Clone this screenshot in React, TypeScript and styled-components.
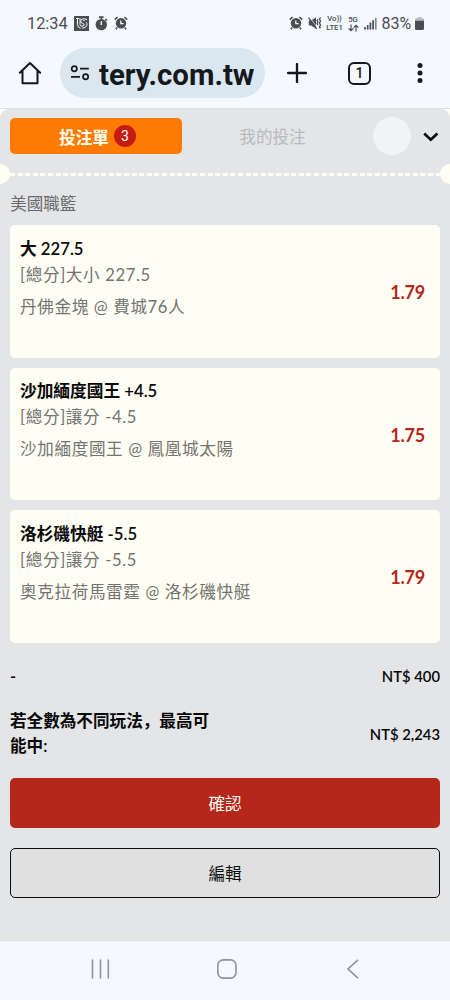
import React from "react";
import styled, { createGlobalStyle } from "styled-components";

const GlobalStyle = createGlobalStyle`
  * { box-sizing: border-box; }
  body { margin: 0; background: #f5f8fd; }
  button { margin: 0; padding: 0; border: 0; background: none; color: inherit; font: inherit; letter-spacing: inherit; }
  svg { display: block; flex: none; }
`;

const Screen = styled.div`
  width: 450px;
  height: 1000px;
  display: flex;
  flex-direction: column;
  overflow: hidden;
  background: #f5f8fd;
  font-family: Lato, "Noto Sans CJK TC", sans-serif;
  font-size: 16.6px;
`;

const StatusBar = styled.header`
  height: 46px;
  display: flex;
  justify-content: space-between;
  padding: 0 26px 0 27px;
  color: #4b4d50;
  font-family: Roboto, sans-serif;
`;

const StatusGroup = styled.div<{ $gap: number }>`
  display: flex;
  align-items: center;
  gap: ${(p) => p.$gap}px;
`;

const Clock = styled.span`
  width: 41px;
  font-size: 16.3px;
  white-space: nowrap;
`;

const NetworkLabel = styled.span<{ $width: number }>`
  width: ${(p) => p.$width}px;
  display: flex;
  flex-direction: column;
  align-items: center;
  font-size: 7.8px;
  font-weight: 500;
  letter-spacing: -0.1px;
  line-height: 9px;
  white-space: nowrap;
`;

const Battery = styled.span`
  width: 33.5px;
  font-size: 16px;
  white-space: nowrap;
`;

const BrowserBar = styled.div`
  height: 63px;
  display: flex;
  align-items: flex-start;
  padding: 2px 0 0 18px;
  color: #15191c;
  border-bottom: 1px solid #d9e0e7;
`;

const ToolButton = styled.button<{ $width: number }>`
  width: ${(p) => p.$width}px;
  height: 50px;
  display: flex;
  align-items: center;
  justify-content: flex-start;
`;

const AddressPill = styled.div`
  width: 205px;
  height: 50px;
  margin-right: 22px;
  display: flex;
  align-items: center;
  gap: 9px;
  padding-left: 10px;
  border-radius: 25px;
  background: #dae7f0;
`;

const Address = styled.span`
  padding-top: 3px;
  font: 700 29.4px/46px Roboto, sans-serif;
  white-space: nowrap;
`;

const Backdrop = styled.div`
  flex: 1;
  min-height: 0;
  background: #fffef4;
`;

const Sheet = styled.main`
  height: 100%;
  display: flex;
  flex-direction: column;
  padding-top: 9.3px;
  border-radius: 9px 9px 0 0;
  background: #e4e5e7;
`;

const Tabs = styled.nav`
  height: 35.7px;
  display: flex;
  align-items: center;
  padding: 0 11px 0 10px;
`;

const ActiveTab = styled.button`
  width: 172px;
  height: 100%;
  display: flex;
  align-items: center;
  justify-content: center;
  gap: 5px;
  padding: 1px 0 0 3px;
  border-radius: 5px;
  background: #ff7a00;
  color: #fffef4;
  font-weight: 700;
`;

const Count = styled.span`
  width: 22px;
  height: 22px;
  margin-top: -1px;
  border-radius: 50%;
  background: #c41b12;
  font: 400 14px/22px Roboto, sans-serif;
  text-align: center;
`;

const Tab = styled.button`
  width: 181px;
  color: #b9babb;
  text-align: center;
`;

const Avatar = styled.span`
  width: 38px;
  height: 38px;
  margin: 0 12px 0 10px;
  border-radius: 50%;
  background: #f2f3f5;
`;

const Perforation = styled.div`
  height: 20px;
  margin-top: 10px;
  display: flex;
  align-items: center;
  justify-content: space-between;
`;

const Notch = styled.span<{ $right?: boolean }>`
  width: 10px;
  height: 20px;
  border-radius: ${(p) => (p.$right ? "10px 0 0 10px" : "0 10px 10px 0")};
  background: #fffef4;
`;

const DashedLine = styled.span`
  flex: 1;
  height: 3px;
  margin-top: 1px;
  background: repeating-linear-gradient(90deg, #fffef4 0 5px, transparent 5px 7.6px);
`;

const League = styled.h2`
  margin: 7px 0 0 10.3px;
  height: 34.4px;
  flex: none;
  color: #68696b;
  font-size: 16.5px;
  font-weight: 400;
  line-height: 26px;
`;

const BetList = styled.section`
  display: flex;
  flex-direction: column;
  gap: 10px;
  padding: 0 10px;
`;

const BetCard = styled.article`
  height: 132.5px;
  display: flex;
  justify-content: space-between;
  align-items: center;
  padding: 0 15px 0 10px;
  border-radius: 5px;
  background: #fffef4;
`;

const BetInfo = styled.div`
  align-self: stretch;
  padding-top: 10.6px;
`;

const Pick = styled.h3`
  margin: 0;
  color: #080808;
  font-size: 16.7px;
  font-weight: 600;
  line-height: 26px;
`;

const Detail = styled.p<{ $spaced?: boolean }>`
  margin: ${(p) => (p.$spaced ? 6 : 0)}px 0 0;
  color: #737370;
  font-size: 16.6px;
  letter-spacing: 0.63px;
  line-height: 26px;
`;

const Odds = styled.strong`
  padding-top: 1px;
  color: #b5261b;
  font-size: 18px;
  letter-spacing: -0.2px;
  line-height: 22px;
`;

const SummaryRow = styled.div<{ $height: number; $offset?: number }>`
  height: ${(p) => p.$height}px;
  flex: none;
  display: flex;
  align-items: center;
  justify-content: space-between;
  padding: ${(p) => p.$offset ?? 0}px 10px 0;
  color: #080808;
  font-weight: 600;
  line-height: 25.6px;
`;

const SummaryLabel = styled.span`
  width: 208px;
  font-family: Lato, "Noto Sans CJK SC", sans-serif;
`;

const Amount = styled.span`
  font-size: 14.8px;
`;

const Actions = styled.div`
  display: flex;
  flex-direction: column;
  gap: 20px;
  padding: 17.8px 10px 0;
`;

const ActionButton = styled.button<{ $primary?: boolean }>`
  height: 50px;
  border: ${(p) => (p.$primary ? "0" : "1px solid #0c0c0c")};
  border-radius: 5px;
  background: ${(p) => (p.$primary ? "#b5261b" : "#e0e0e0")};
  color: ${(p) => (p.$primary ? "#fffef4" : "#101010")};
`;

const SystemNav = styled.footer`
  height: 60px;
  display: flex;
  align-items: center;
  gap: 106.5px;
  padding: 0 0 4px 90px;
  border-top: 1px solid #dddfe2;
  color: #919397;
`;

const AlarmIcon = () => (
  <svg width="14" height="14" viewBox="0 0 14 14" fill="none">
    <circle cx="7" cy="7.3" r="5.2" fill="currentColor" />
    <path d="M.8 3.6 3.6 1M13.2 3.6 10.4 1M3.2 11.6l-1.3 1.6M10.8 11.6l1.3 1.6" stroke="currentColor" strokeWidth="1.6" />
    <path d="M6.8 4.4v3.2h2.8" stroke="#f5f8fd" strokeWidth="1.3" />
  </svg>
);

const AppBadgeIcon = () => (
  <svg width="15" height="15" viewBox="0 0 15 15" fill="none">
    <path d="M0 0h15v15H0z" fill="currentColor" />
    <path d="M2 2.5h3M3.5 2.5v5.8q0 3.2 3.1 4M6 2.2v6.5q0 1.5 2 1.5 2.2 0 2.2-1.3 0-1.1-1.8-1.7-1.8-.6-1.8-2.1 0-2.3 3.2-2.3 2.6 0 3.2 1.1M9 5q.2-1 1.7-.5M12 6.2q1.3 1 .9 3-.7 2.8-4.7 3" stroke="#f5f8fd" strokeWidth="1" />
  </svg>
);

const TimerIcon = () => (
  <svg width="13" height="15" viewBox="0 0 13 15" fill="none">
    <circle cx="6.3" cy="8.6" r="5.7" fill="currentColor" />
    <path d="M4 1.2h4.6M10.3 3l1.6 1.5M6.3 1v3" stroke="currentColor" strokeWidth="1.7" />
    <path d="M6.3 5.2v3.8" stroke="#f5f8fd" strokeWidth="1.4" />
  </svg>
);

const MuteIcon = () => (
  <svg width="14" height="14" viewBox="0 0 14 14" fill="none">
    <path d="M.8 4.6h2.4L8 1.2v11.4L3.2 9.5H.8z" fill="currentColor" />
    <path d="M1.8 1.5 9.2 11.5" stroke="#f5f8fd" strokeWidth=".8" />
    <path d="M.5 1.7 8.7 12.8M9.9 3.2l-.8 1.4.8 1.4-.8 1.6.8 1.4M12.5 1.4l-1 1.8 1 1.9-1 1.9 1 1.9-1 1.9.8 1.6" stroke="currentColor" strokeWidth="1.3" />
  </svg>
);

const DataArrowsIcon = () => (
  <svg width="11" height="8" viewBox="0 -.5 11 8" fill="none" stroke="currentColor" strokeWidth="1.2">
    <path d="M3 0v6M.6 3.8 3 6.2l2.4-2.4M8 7V1M5.6 3.2 8 .8l2.4 2.4" />
  </svg>
);

const SignalIcon = () => (
  <svg width="13" height="13" viewBox="0 0 13 13" stroke="currentColor" strokeWidth="1.7">
    <path d="M1 10v2.5M3.7 8v4.5M6.4 5.5v7M9.1 3.2v9.3" />
    <path d="M11.8.8v11.7" opacity=".65" />
  </svg>
);

const BatteryIcon = () => (
  <svg width="9" height="13" viewBox="0 0 9 13" fill="currentColor">
    <path d="M2.5 0h4v1.2H8q1 0 1 1v2H0v-2q0-1 1-1h1.5z" opacity=".35" />
    <path d="M0 3.7h9v7.8q0 1.5-1.5 1.5h-6Q0 13 0 11.5z" />
  </svg>
);

const HomeIcon = () => (
  <svg width="24" height="24" viewBox="0 0 24 24" fill="none" stroke="currentColor" strokeWidth="2" strokeLinejoin="round" strokeLinecap="round">
    <path d="M1.8 11.8 12 2l10.2 9.8M4.5 10v12.2h15V10" />
  </svg>
);

const SiteSettingsIcon = () => (
  <svg width="20" height="18" viewBox="0 0 20 18" fill="none" stroke="currentColor" strokeWidth="1.7">
    <circle cx="4.3" cy="4.7" r="2.6" />
    <path d="M10 4.7h8.8M1 12.8h9" />
    <circle cx="15.6" cy="12.8" r="2.6" />
  </svg>
);

const PlusIcon = () => (
  <svg width="20" height="20" viewBox="0 0 20 20" stroke="currentColor" strokeWidth="2.3" strokeLinecap="round">
    <path d="M10 1.1v17.8M1.1 10h17.8" />
  </svg>
);

const TabCount = styled.span`
  width: 23px;
  height: 23px;
  border: 2px solid currentColor;
  border-radius: 6px;
  font: 500 14px/19px Roboto, sans-serif;
  text-align: center;
`;

const MenuIcon = () => (
  <svg width="6" height="22" viewBox="0 0 6 22" fill="currentColor">
    <circle cx="3" cy="3.5" r="2.5" />
    <circle cx="3" cy="11" r="2.5" />
    <circle cx="3" cy="18.5" r="2.5" />
  </svg>
);

const Chevron = styled.svg`
  margin-top: 2px;
`;

const ChevronIcon = () => (
  <Chevron width="16" height="10" viewBox="0 0 16 10" fill="none" stroke="#050505" strokeWidth="2.7">
    <path d="m1.2 1.5 6.6 6.2 6.6-6.2" />
  </Chevron>
);

const RecentsIcon = () => (
  <svg width="20" height="20" viewBox="0 0 20 20" stroke="currentColor" strokeWidth="1.6" strokeLinecap="round">
    <path d="M2.5 1v18M10.5 1v18M18.3 1v18" />
  </svg>
);

const NavHomeIcon = () => (
  <svg width="20" height="20" viewBox="0 0 20 20" fill="none" stroke="currentColor" strokeWidth="1.6">
    <rect x=".8" y=".9" width="18.2" height="18.2" rx="5.5" />
  </svg>
);

const BackIcon = () => (
  <svg width="28" height="20" viewBox="0 0 28 20" fill="none" stroke="currentColor" strokeWidth="1.6">
    <path d="M15 .8 5 10l10 9.2" />
  </svg>
);

const bets = [
  { pick: "大 227.5", market: "[總分]大小 227.5", match: "丹佛金塊 @ 費城76人", odds: "1.79" },
  { pick: "沙加緬度國王 +4.5", market: "[總分]讓分 -4.5", match: "沙加緬度國王 @ 鳳凰城太陽", odds: "1.75" },
  { pick: "洛杉磯快艇 -5.5", market: "[總分]讓分 -5.5", match: "奧克拉荷馬雷霆 @ 洛杉磯快艇", odds: "1.79" },
];

export default function App() {
  return (
    <Screen>
      <GlobalStyle />
      <StatusBar>
        <StatusGroup $gap={6}>
          <Clock>12:34</Clock>
          <AppBadgeIcon />
          <TimerIcon />
          <AlarmIcon />
        </StatusGroup>
        <StatusGroup $gap={5}>
          <AlarmIcon />
          <MuteIcon />
          <NetworkLabel $width={16}>
            <span>Vo))</span>
            <span>LTE1</span>
          </NetworkLabel>
          <NetworkLabel $width={11}>
            <span>5G</span>
            <DataArrowsIcon />
          </NetworkLabel>
          <SignalIcon />
          <StatusGroup $gap={0}>
            <Battery>83%</Battery>
            <BatteryIcon />
          </StatusGroup>
        </StatusGroup>
      </StatusBar>
      <BrowserBar>
        <ToolButton $width={42} aria-label="Home"><HomeIcon /></ToolButton>
        <AddressPill>
          <SiteSettingsIcon />
          <Address>tery.com.tw</Address>
        </AddressPill>
        <ToolButton $width={61} aria-label="New tab"><PlusIcon /></ToolButton>
        <ToolButton $width={69} aria-label="Tabs"><TabCount>1</TabCount></ToolButton>
        <ToolButton $width={6} aria-label="Menu"><MenuIcon /></ToolButton>
      </BrowserBar>
      <Backdrop>
        <Sheet>
          <Tabs>
            <ActiveTab>
              投注單<Count>3</Count>
            </ActiveTab>
            <Tab>我的投注</Tab>
            <Avatar />
            <ChevronIcon />
          </Tabs>
          <Perforation>
            <Notch />
            <DashedLine />
            <Notch $right />
          </Perforation>
          <League>美國職籃</League>
          <BetList>
            {bets.map((bet) => (
              <BetCard key={bet.pick}>
                <BetInfo>
                  <Pick>{bet.pick}</Pick>
                  <Detail>{bet.market}</Detail>
                  <Detail $spaced>{bet.match}</Detail>
                </BetInfo>
                <Odds>{bet.odds}</Odds>
              </BetCard>
            ))}
          </BetList>
          <SummaryRow $height={66} $offset={2}>
            <SummaryLabel>-</SummaryLabel>
            <Amount>NT$ 400</Amount>
          </SummaryRow>
          <SummaryRow $height={51}>
            <SummaryLabel>若全數為不同玩法，最高可能中:</SummaryLabel>
            <Amount>NT$ 2,243</Amount>
          </SummaryRow>
          <Actions>
            <ActionButton $primary>確認</ActionButton>
            <ActionButton>編輯</ActionButton>
          </Actions>
        </Sheet>
      </Backdrop>
      <SystemNav>
        <RecentsIcon />
        <NavHomeIcon />
        <BackIcon />
      </SystemNav>
    </Screen>
  );
}
